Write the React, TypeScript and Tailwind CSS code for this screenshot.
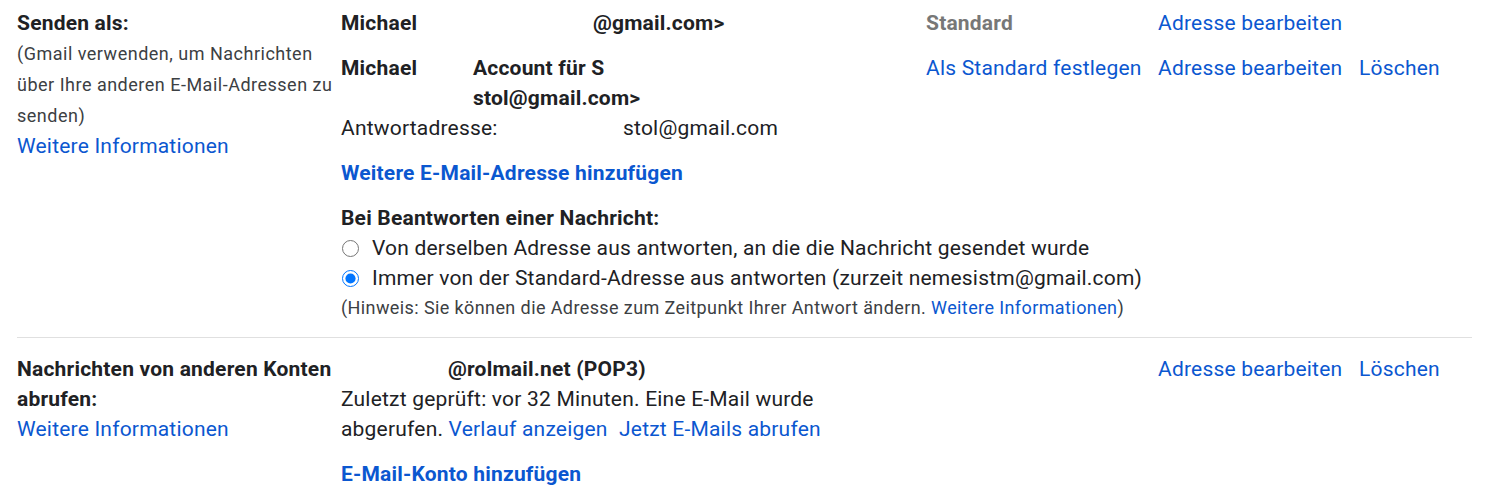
import React from "react";

const Link = ({ children, className = "" }: { children: React.ReactNode; className?: string }) => (
	<a className={`text-[#0b57d0] cursor-pointer ${className}`}>{children}</a>
);

export default function App() {
	return (
		<div
			className="w-[1486px] h-[500px] bg-white text-[#202124] text-[21px] tracking-[0.2px] leading-[30px] overflow-hidden"
			style={{ fontFamily: "Roboto, 'Liberation Sans', sans-serif" }}
		>
			<div className="pl-[17px] pr-[14px]">
				{/* Senden als */}
				<div className="flex pt-[8px] pb-[14px] border-b border-[#e0e0e0]">
					<div className="w-[324px] shrink-0 pr-[6px]">
						<div className="font-bold">Senden als:</div>
						<div className="text-[18px] tracking-[0.5px] leading-[31px] text-[#3c4043]">
							(Gmail verwenden, um Nachrichten über Ihre anderen E-Mail-Adressen zu senden)
						</div>
						<Link>Weitere Informationen</Link>
					</div>
					<div className="flex-1">
						<div className="flex">
							<div className="w-[585px] flex font-bold">
								<div className="w-[132px]">Michael</div>
								<div className="pl-[120px]">@gmail.com&gt;</div>
							</div>
							<div className="w-[232px] font-bold text-[#777]">Standard</div>
							<Link>Adresse bearbeiten</Link>
						</div>
						<div className="flex mt-[15px]">
							<div className="w-[585px] flex font-bold">
								<div className="w-[132px]">Michael</div>
								<div>
									<div>Account für S</div>
									<div>stol@gmail.com&gt;</div>
								</div>
							</div>
							<div className="w-[232px]">
								<Link>Als Standard festlegen</Link>
							</div>
							<div className="w-[201px]">
								<Link>Adresse bearbeiten</Link>
							</div>
							<Link>Löschen</Link>
						</div>
						<div className="flex">
							<div className="w-[282px]">Antwortadresse:</div>
							<div>stol@gmail.com</div>
						</div>
						<div className="mt-[15px] font-bold">
							<Link>Weitere E-Mail-Adresse hinzufügen</Link>
						</div>
						<div className="mt-[15px] font-bold">Bei Beantworten einer Nachricht:</div>
						<label className="flex items-center gap-[13px]">
							<input type="radio" name="reply" className="w-[17px] h-[17px] m-0 ml-[1px]" />
							<span>Von derselben Adresse aus antworten, an die die Nachricht gesendet wurde</span>
						</label>
						<label className="flex items-center gap-[13px]">
							<input type="radio" name="reply" defaultChecked className="w-[17px] h-[17px] m-0 ml-[1px]" />
							<span>Immer von der Standard-Adresse aus antworten (zurzeit nemesistm@gmail.com)</span>
						</label>
						<div className="text-[18px] tracking-[0.4px] leading-[30px] text-[#3c4043]">
							(Hinweis: Sie können die Adresse zum Zeitpunkt Ihrer Antwort ändern.{" "}
							<Link>Weitere Informationen</Link>)
						</div>
					</div>
				</div>

				{/* Nachrichten von anderen Konten abrufen */}
				<div className="flex pt-[16px]">
					<div className="w-[324px] shrink-0">
						<div className="font-bold">Nachrichten von anderen Konten abrufen:</div>
						<Link>Weitere Informationen</Link>
					</div>
					<div className="flex-1">
						<div className="flex">
							<div className="w-[817px] font-bold pl-[107px]">@rolmail.net (POP3)</div>
							<div className="w-[201px]">
								<Link>Adresse bearbeiten</Link>
							</div>
							<Link>Löschen</Link>
						</div>
						<div>Zuletzt geprüft: vor 32 Minuten. Eine E-Mail wurde</div>
						<div>
							abgerufen. <Link>Verlauf anzeigen</Link>{" "}
							<Link className="ml-[6px]">Jetzt E-Mails abrufen</Link>
						</div>
						<div className="mt-[15px] font-bold">
							<Link>E-Mail-Konto hinzufügen</Link>
						</div>
					</div>
				</div>
			</div>
		</div>
	);
}
